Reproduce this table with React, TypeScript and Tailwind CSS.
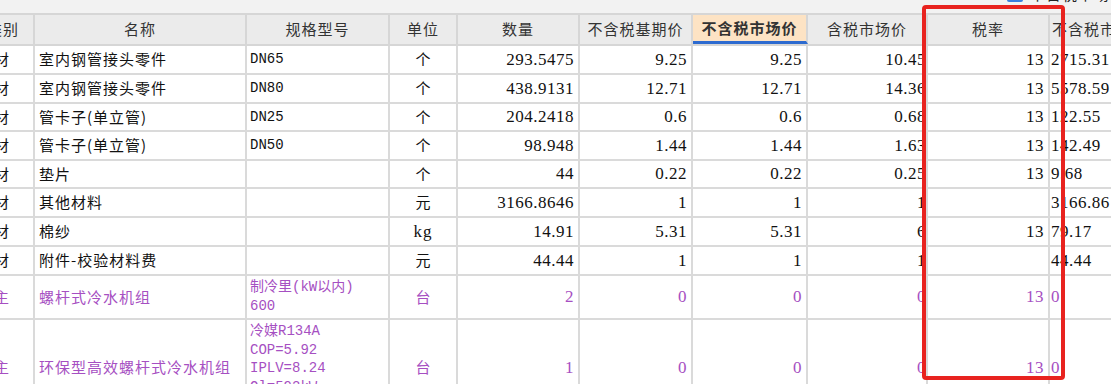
import React from "react";

type Row = {
  kind: string;
  name: string;
  spec: string[];
  unit: string;
  qty: string;
  base: string;
  market: string;
  taxed: string;
  rate: string;
  total: string;
  h: string;
  main?: boolean;
};

const rows: Row[] = [
  { kind: "材", name: "室内钢管接头零件", spec: ["DN65"], unit: "个", qty: "293.5475", base: "9.25", market: "9.25", taxed: "10.45", rate: "13", total: "2715.31", h: "h-[29px]" },
  { kind: "材", name: "室内钢管接头零件", spec: ["DN80"], unit: "个", qty: "438.9131", base: "12.71", market: "12.71", taxed: "14.36", rate: "13", total: "5578.59", h: "h-[29px]" },
  { kind: "材", name: "管卡子(单立管)", spec: ["DN25"], unit: "个", qty: "204.2418", base: "0.6", market: "0.6", taxed: "0.68", rate: "13", total: "122.55", h: "h-[28px]" },
  { kind: "材", name: "管卡子(单立管)", spec: ["DN50"], unit: "个", qty: "98.948", base: "1.44", market: "1.44", taxed: "1.63", rate: "13", total: "142.49", h: "h-[29px]" },
  { kind: "材", name: "垫片", spec: [], unit: "个", qty: "44", base: "0.22", market: "0.22", taxed: "0.25", rate: "13", total: "9.68", h: "h-[28px]" },
  { kind: "材", name: "其他材料", spec: [], unit: "元", qty: "3166.8646", base: "1", market: "1", taxed: "1", rate: "", total: "3166.86", h: "h-[29px]" },
  { kind: "材", name: "棉纱", spec: [], unit: "kg", qty: "14.91", base: "5.31", market: "5.31", taxed: "6", rate: "13", total: "79.17", h: "h-[29px]" },
  { kind: "材", name: "附件-校验材料费", spec: [], unit: "元", qty: "44.44", base: "1", market: "1", taxed: "1", rate: "", total: "44.44", h: "h-[29px]" },
  { kind: "主", name: "螺杆式冷水机组", spec: ["制冷里(kW以内)", "600"], unit: "台", qty: "2", base: "0", market: "0", taxed: "0", rate: "13", total: "0", h: "h-[44px]", main: true },
  { kind: "主", name: "环保型高效螺杆式冷水机组", spec: ["冷媒R134A", "COP=5.92", "IPLV=8.24", "Ql=592kW", "制冷量1000kW"], unit: "台", qty: "1", base: "0", market: "0", taxed: "0", rate: "13", total: "0", h: "h-[97px]", main: true },
];

const cjk = { fontFamily: '"Noto Sans CJK SC", "Noto Sans", sans-serif' };
const mono = { fontFamily: '"Liberation Mono", "Noto Sans CJK SC", monospace' };
const num = { fontFamily: '"Liberation Serif", "Noto Sans CJK SC", serif' };

const cell = "flex shrink-0 items-center border-r-2 border-[#dadada] overflow-hidden whitespace-nowrap";
const n = "text-[17px] tracking-[0.5px]";

function HeaderRow() {
  const hd = "flex shrink-0 items-center justify-center border-r-2 border-[#d6d6d6] text-[15px] tracking-[1px] text-[#333]";
  return (
    <div className="flex h-[33px] border-y-2 border-[#d6d6d6] bg-[#ebebeb]" style={cjk}>
      <div className={`${hd} w-[62px]`}>类别</div>
      <div className={`${hd} w-[212px]`}>名称</div>
      <div className={`${hd} w-[143px]`}>规格型号</div>
      <div className={`${hd} w-[68px]`}>单位</div>
      <div className={`${hd} w-[122px]`}>数量</div>
      <div className={`${hd} w-[113px]`}>不含税基期价</div>
      <div className={`${hd} w-[115px] bg-[#fde3c4] font-bold text-[#111] border-b-[3px] border-b-[#2d6bd0]`}>不含税市场价</div>
      <div className={`${hd} w-[120px]`}>含税市场价</div>
      <div className={`${hd} w-[122px]`}>税率</div>
      <div className={`${hd} w-[150px] justify-start pl-[2px]`}>不含税市场价合计</div>
    </div>
  );
}

function DataRow({ r }: { r: Row }) {
  const color = r.main ? "text-[#a64fc2]" : "text-[#111]";
  const multi = r.spec.length > 1;
  const latinUnit = r.unit === "kg";
  return (
    <div className={`flex ${r.h} border-b-2 border-[#dadada] ${color}`}>
      <div className={`${cell} w-[62px] pl-[21px] text-[15px]`} style={cjk}>{r.kind}</div>
      <div className={`${cell} w-[212px] pl-[4px] text-[15px] tracking-[1px]`} style={cjk}>{r.name}</div>
      <div className={`${cell} w-[143px] pl-[3px] text-[14px] ${multi ? "flex-col items-start justify-start pt-[2px] leading-[18.5px]" : ""}`} style={mono}>
        {r.spec.map((s, i) => (
          <span key={i}>{s}</span>
        ))}
      </div>
      <div className={`${cell} w-[68px] justify-center ${latinUnit ? "text-[17px] tracking-[1px]" : "text-[15px]"}`} style={latinUnit ? num : cjk}>{r.unit}</div>
      <div className={`${cell} w-[122px] justify-end pr-[4px] ${n}`} style={num}>{r.qty}</div>
      <div className={`${cell} w-[113px] justify-end pr-[4px] ${n}`} style={num}>{r.base}</div>
      <div className={`${cell} w-[115px] justify-end pr-[4px] ${n}`} style={num}>{r.market}</div>
      <div className={`${cell} w-[120px] justify-end pr-[0px] ${n}`} style={num}>{r.taxed}</div>
      <div className={`${cell} w-[122px] justify-end pr-[4px] ${n}`} style={num}>{r.rate}</div>
      <div className={`${cell} w-[150px] pl-[1px] ${n}`} style={num}>{r.total}</div>
    </div>
  );
}

export default function App() {
  return (
    <div className="relative h-[384px] w-[1111px] overflow-hidden bg-white">
      {/* toolbar strip, mostly scrolled out of view */}
      <div className="flex h-[13px] items-end overflow-hidden bg-[#f2f2f2] pl-[1007px]">
        <div className="mb-[8px] flex shrink-0 items-center gap-[7px]">
          <span className="flex h-[16px] w-[16px] items-center justify-center rounded-[2px] bg-[#3b7fe0] text-[11px] leading-none text-white">✓</span>
          <span className="text-[15px] tracking-[1px] text-[#222]" style={cjk}>不含税市场价</span>
        </div>
      </div>

      <div className="-ml-[27px] w-max">
        <HeaderRow />
        {rows.map((r, i) => (
          <DataRow key={i} r={r} />
        ))}
      </div>

      {/* red highlight box */}
      <div className="absolute left-[922px] top-[5px] h-[375px] w-[143px] rounded-[4px] border-[4px] border-[#e8231f]" />
    </div>
  );
}
